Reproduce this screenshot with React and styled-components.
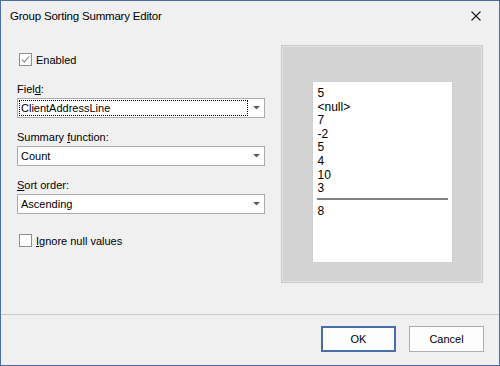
import React from "react";
import styled, { createGlobalStyle } from "styled-components";

const GlobalStyle = createGlobalStyle`
  html, body { margin: 0; padding: 0; background: #f0f0f0; }
  body { font-family: "Segoe UI", "Liberation Sans", Arial, sans-serif; }
`;

const Window = styled.div`
  width: 500px;
  height: 366px;
  box-sizing: border-box;
  border: 1px solid #4a6ea9;
  background: #f0f0f0;
  display: flex;
  flex-direction: column;
  font-family: "Segoe UI", "Liberation Sans", Arial, sans-serif;
  font-size: 11px;
  color: #000;
`;

const TitleBar = styled.div`
  height: 30px;
  flex: none;
  display: flex;
  align-items: center;
  justify-content: space-between;
  padding: 0 18px 0 9px;
`;

const Title = styled.span`
  font-size: 11.5px;
  letter-spacing: -0.2px;
`;

const CloseIcon = styled.svg`
  width: 10px;
  height: 10px;
  display: block;
`;

const Body = styled.div`
  flex: 1;
  display: flex;
  gap: 16px;
  padding: 14px 16px 0 16px;
`;

const LeftColumn = styled.div`
  width: 248px;
  flex: none;
  display: flex;
  flex-direction: column;
  padding-top: 6px;
`;

const CheckRow = styled.label`
  display: flex;
  align-items: center;
  gap: 4px;
  height: 17px;
  padding-left: 2px;
  margin-top: ${(p) => p.$top || 0}px;
`;

const Box = styled.span`
  width: 13px;
  height: 13px;
  box-sizing: border-box;
  border: 1px solid #8f8f8f;
  background: #fff;
  display: flex;
  align-items: center;
  justify-content: center;
`;

const Label = styled.div`
  height: 15px;
  line-height: 15px;
  margin-top: ${(p) => p.$top}px;
  margin-bottom: 1px;
`;

const Key = styled.u`
  text-decoration: underline;
  text-underline-offset: 1px;
`;

const Combo = styled.div`
  height: 20px;
  box-sizing: border-box;
  border: 1px solid #acacac;
  background: #fff;
  display: flex;
  align-items: stretch;
`;

const ComboValue = styled.div`
  flex: 1;
  margin: 1px;
  padding-left: 1px;
  border: 1px dotted ${(p) => (p.$focused ? "#000" : "transparent")};
  display: flex;
  align-items: center;
  line-height: 14px;
`;

const ComboArrow = styled.div`
  width: 15px;
  display: flex;
  align-items: center;
  justify-content: center;
`;

const Preview = styled.div`
  width: 202px;
  height: 238px;
  box-sizing: border-box;
  border: 1px solid #c8c8c8;
  box-shadow: inset 0 0 0 1px #e4e4e4;
  background: #d3d3d3;
  display: flex;
  flex-direction: column;
  align-items: center;
  padding-top: 35px;
`;

const Paper = styled.div`
  width: 141px;
  height: 182px;
  box-sizing: border-box;
  border: 1px solid #cfcfcf;
  background: #fff;
  padding: 5px 4px 0 4px;
  font-family: "Liberation Sans", Arial, sans-serif;
  font-size: 12px;
  line-height: 13.6px;
  color: #000;
`;

const Value = styled.div`
  padding-left: 1px;
  margin-top: ${(p) => p.$top || 0}px;
`;

const Rule = styled.div`
  height: 2px;
  background: #808080;
  margin-top: 2px;
`;

const Footer = styled.div`
  height: 51px;
  flex: none;
  box-sizing: border-box;
  border-top: 1px solid #c9c9c9;
  display: flex;
  justify-content: flex-end;
  align-items: flex-start;
  gap: 13px;
  padding: 11px 15px 0 0;
`;

const Button = styled.button`
  width: 75px;
  height: 26px;
  box-sizing: border-box;
  border: ${(p) => (p.$default ? "2px solid #4a6ea9" : "1px solid #adadad")};
  background: #fdfdfd;
  font-family: inherit;
  font-size: 11px;
  color: #000;
  padding: 0;
  margin: 0;
`;

const Check = () => (
  <svg width="9" height="9" viewBox="0 0 9 9">
    <polyline points="1,4.5 3.3,7 8,1.5" fill="none" stroke="#7a7a7a" strokeWidth="1.1" />
  </svg>
);

const Arrow = () => (
  <svg width="7" height="4" viewBox="0 0 7 4">
    <polygon points="0,0 7,0 3.5,3.5" fill="#606060" />
  </svg>
);

const values = ["5", "<null>", "7", "-2", "5", "4", "10", "3"];

export default function App() {
  return (
    <>
      <GlobalStyle />
      <Window>
        <TitleBar>
          <Title>Group Sorting Summary Editor</Title>
          <CloseIcon viewBox="0 0 10 10">
            <line x1="0.5" y1="0.5" x2="9.5" y2="9.5" stroke="#1a1a1a" strokeWidth="1.1" />
            <line x1="9.5" y1="0.5" x2="0.5" y2="9.5" stroke="#1a1a1a" strokeWidth="1.1" />
          </CloseIcon>
        </TitleBar>
        <Body>
          <LeftColumn>
            <CheckRow>
              <Box><Check /></Box>
              <span>Enabled</span>
            </CheckRow>
            <Label $top={14}>Fiel<Key>d</Key>:</Label>
            <Combo>
              <ComboValue $focused>ClientAddressLine</ComboValue>
              <ComboArrow><Arrow /></ComboArrow>
            </Combo>
            <Label $top={12}>Summary <Key>f</Key>unction:</Label>
            <Combo>
              <ComboValue>Count</ComboValue>
              <ComboArrow><Arrow /></ComboArrow>
            </Combo>
            <Label $top={12}><Key>S</Key>ort order:</Label>
            <Combo>
              <ComboValue>Ascending</ComboValue>
              <ComboArrow><Arrow /></ComboArrow>
            </Combo>
            <CheckRow $top={18}>
              <Box />
              <span><Key>I</Key>gnore null values</span>
            </CheckRow>
          </LeftColumn>
          <Preview>
            <Paper>
              {values.map((v, i) => (
                <Value key={i}>{v}</Value>
              ))}
              <Rule />
              <Value $top={5}>8</Value>
            </Paper>
          </Preview>
        </Body>
        <Footer>
          <Button $default>OK</Button>
          <Button>Cancel</Button>
        </Footer>
      </Window>
    </>
  );
}
